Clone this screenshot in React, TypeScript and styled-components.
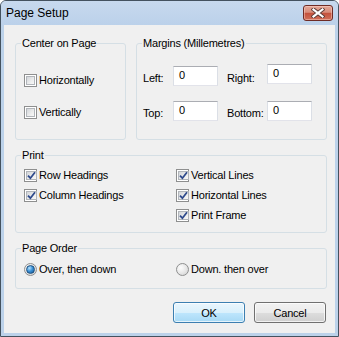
import styled, { createGlobalStyle } from "styled-components";

const GlobalStyle = createGlobalStyle`
  html, body { margin: 0; padding: 0; }
  body {
    background: #ffffff;
    font-family: "Liberation Sans", Arial, sans-serif;
    font-size: 11px;
    letter-spacing: -0.2px;
    color: #000000;
  }
  * { box-sizing: border-box; }
`;

const Window = styled.div`
  width: 339px;
  height: 337px;
  display: flex;
  flex-direction: column;
  border: 1px solid #44525f;
  border-radius: 6px 6px 0 0;
  background: #bcd2ea;
`;

const TitleBar = styled.div`
  height: 24px;
  flex: none;
  display: flex;
  align-items: center;
  justify-content: space-between;
  padding: 0 5px 0 5px;
  border-radius: 5px 5px 0 0;
  background: linear-gradient(#c7d9ee, #bbd1ea);
`;

const Title = styled.span`
  font-size: 12px;
  line-height: 14px;
  letter-spacing: 0;
`;

const CloseButton = styled.div`
  width: 30px;
  height: 16px;
  display: flex;
  align-items: center;
  justify-content: center;
  border: 1px solid #6e2b25;
  border-radius: 3px;
  background: linear-gradient(#e4a898 0%, #d88c7a 45%, #c4513c 52%, #d0705a 100%);
  box-shadow: inset 0 0 0 1px rgba(255, 220, 210, 0.45);
`;

const Client = styled.div`
  flex: 1;
  margin: 0 3px 3px;
  padding: 12px 8px 10px 11px;
  display: flex;
  flex-direction: column;
  background: #f0f0f0;
`;

const TopRow = styled.div`
  height: 103px;
  display: grid;
  grid-template-columns: 111px 1fr;
  column-gap: 10px;
`;

const Group = styled.fieldset<{ $top: number; $height?: number }>`
  margin: 0;
  min-width: 0;
  height: ${({ $height }) => ($height ? `${$height}px` : "auto")};
  padding: ${({ $top }) => $top}px 8px 0;
  border: 1px solid #d5dfe5;
  border-radius: 3px;
`;

const Legend = styled.legend`
  margin-left: -3px;
  padding: 0 1px;
  line-height: 13px;
`;

const Stack = styled.div<{ $gap: number }>`
  display: flex;
  flex-direction: column;
  gap: ${({ $gap }) => $gap}px;
`;

const Columns = styled.div`
  display: grid;
  grid-template-columns: 152px 1fr;
`;

const OptionRow = styled.label`
  display: flex;
  align-items: center;
  gap: 2px;
  height: 13px;
  line-height: 13px;
  white-space: nowrap;
`;

const CheckBox = styled.span`
  width: 13px;
  height: 13px;
  flex: none;
  padding: 1px;
  display: flex;
  border: 1px solid #8e8f8f;
  background: #ffffff;
`;

const CheckFace = styled.span`
  flex: 1;
  display: flex;
  align-items: center;
  justify-content: center;
  border: 1px solid #b1b5ba;
  background: linear-gradient(135deg, #d3d6da 0%, #eceded 60%, #f8f8f8 100%);
`;

const RadioCircle = styled.span<{ $checked?: boolean }>`
  width: 13px;
  height: 13px;
  flex: none;
  display: flex;
  align-items: center;
  justify-content: center;
  border-radius: 50%;
  border: 1px solid #8e8f8f;
  background: radial-gradient(circle at 35% 35%, #fdfdfd 0%, #e6e6e6 55%, #cbcbcb 100%);

  &::after {
    content: "";
    display: ${({ $checked }) => ($checked ? "block" : "none")};
    width: 7px;
    height: 7px;
    border-radius: 50%;
    border: 1px solid #1d4f7e;
    background: radial-gradient(circle at 35% 30%, #b8e4ff 0%, #3d93d8 45%, #115391 100%);
  }
`;

const MarginGrid = styled.div`
  margin-left: -2px;
  display: grid;
  grid-template-columns: 30px 45px 49px 45px;
  row-gap: 15px;
`;

const FieldLabel = styled.span<{ $indent?: number }>`
  align-self: center;
  margin-top: 4px;
  padding-left: ${({ $indent }) => $indent ?? 0}px;
  line-height: 13px;
`;

const NumberBox = styled.div<{ $raise?: boolean }>`
  height: 20px;
  margin-top: ${({ $raise }) => ($raise ? -2 : 0)}px;
  padding: 2px 0 0 5px;
  line-height: 13px;
  background: #ffffff;
  border: 1px solid #e2e3ea;
  border-top-color: #abadb3;
  border-left-color: #dbdfe6;
  border-right-color: #dbdfe6;
`;

const Spacer = styled.div<{ $h: number }>`
  height: ${({ $h }) => $h}px;
  flex: none;
`;

const ButtonRow = styled.div`
  display: flex;
  justify-content: flex-end;
  gap: 9px;
  padding-right: 1px;
`;

const Button = styled.div<{ $default?: boolean }>`
  width: 72px;
  height: 21px;
  display: flex;
  align-items: center;
  justify-content: center;
  border-radius: 3px;
  border: 1px solid ${({ $default }) => ($default ? "#3c7fb1" : "#707070")};
  background: ${({ $default }) =>
    $default
      ? "linear-gradient(#eaf6fd 0%, #d9f0fc 50%, #bee6fd 51%, #a7d9f5 100%)"
      : "linear-gradient(#f2f2f2 0%, #ebebeb 50%, #dddddd 51%, #cfcfcf 100%)"};
  box-shadow: inset 0 0 0 1px rgba(255, 255, 255, 0.7);
`;

const CloseGlyph = () => (
  <svg width="14" height="10" viewBox="0 0 14 10">
    <path d="M2.5 1.5 L11.5 8.5 M11.5 1.5 L2.5 8.5" stroke="#5a3a36" strokeWidth="4" strokeLinecap="square" />
    <path d="M2.5 1.5 L11.5 8.5 M11.5 1.5 L2.5 8.5" stroke="#ffffff" strokeWidth="2.2" strokeLinecap="square" />
  </svg>
);

const CheckMark = () => (
  <svg width="9" height="9" viewBox="0 0 9 9" style={{ overflow: "visible" }}>
    <path d="M1 4.6 L3.4 7.2 L8 1.2" fill="none" stroke="#2e4a8c" strokeWidth="1.8" />
  </svg>
);

const Check = ({ label, checked }: { label: string; checked?: boolean }) => (
  <OptionRow>
    <CheckBox>
      <CheckFace>{checked && <CheckMark />}</CheckFace>
    </CheckBox>
    {label}
  </OptionRow>
);

const Radio = ({ label, checked }: { label: string; checked?: boolean }) => (
  <OptionRow>
    <RadioCircle $checked={checked} />
    {label}
  </OptionRow>
);

const App = () => (
  <>
    <GlobalStyle />
    <Window>
      <TitleBar>
        <Title>Page Setup</Title>
        <CloseButton>
          <CloseGlyph />
        </CloseButton>
      </TitleBar>
      <Client>
        <TopRow>
          <Group $top={24}>
            <Legend>Center on Page</Legend>
            <Stack $gap={19}>
              <Check label="Horizontally" />
              <Check label="Vertically" />
            </Stack>
          </Group>
          <Group $top={16}>
            <Legend>Margins (Millemetres)</Legend>
            <MarginGrid>
              <FieldLabel>Left:</FieldLabel>
              <NumberBox>0</NumberBox>
              <FieldLabel $indent={9}>Right:</FieldLabel>
              <NumberBox $raise>0</NumberBox>
              <FieldLabel>Top:</FieldLabel>
              <NumberBox>0</NumberBox>
              <FieldLabel $indent={9}>Bottom:</FieldLabel>
              <NumberBox>0</NumberBox>
            </MarginGrid>
          </Group>
        </TopRow>
        <Spacer $h={9} />
        <Group $top={7} $height={84}>
          <Legend>Print</Legend>
          <Columns>
            <Stack $gap={7}>
              <Check label="Row Headings" checked />
              <Check label="Column Headings" checked />
            </Stack>
            <Stack $gap={7}>
              <Check label="Vertical Lines" checked />
              <Check label="Horizontal Lines" checked />
              <Check label="Print Frame" checked />
            </Stack>
          </Columns>
        </Group>
        <Spacer $h={9} />
        <Group $top={8} $height={47}>
          <Legend>Page Order</Legend>
          <Columns>
            <Radio label="Over, then down" checked />
            <Radio label="Down. then over" />
          </Columns>
        </Group>
        <Spacer $h={13} />
        <ButtonRow>
          <Button $default>OK</Button>
          <Button>Cancel</Button>
        </ButtonRow>
      </Client>
    </Window>
  </>
);

export default App;
